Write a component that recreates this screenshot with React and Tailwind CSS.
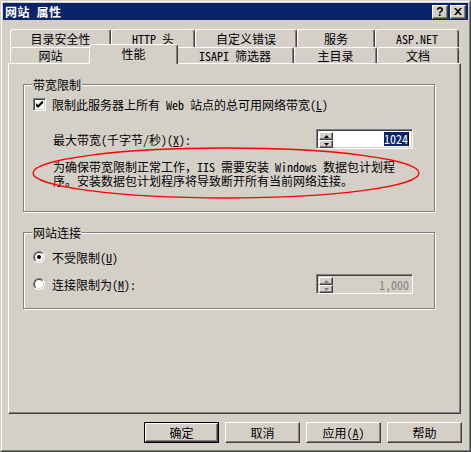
const F = "font-['Noto_Sans_Mono_CJK_SC','Noto_Sans_CJK_SC',sans-serif]";

const raised =
  "border border-t-white border-l-white border-r-[#404040] border-b-[#404040] shadow-[inset_-1px_-1px_0_#808080]";
const sunken =
  "border border-t-[#808080] border-l-[#808080] border-r-white border-b-white shadow-[inset_1px_1px_0_#404040,inset_-1px_-1px_0_#d4d0c8]";
const tabBase =
  "flex items-center justify-center border-t border-l border-r border-t-white border-l-white border-r-[#404040] rounded-t-[3px] shadow-[inset_-1px_0_0_#808080] bg-[#d4d0c8]";

function Arrow({ up, disabled }) {
  return (
    <svg width="5" height="3" viewBox="0 0 5 3">
      {up ? (
        <polygon points="2.5,0 5,3 0,3" fill={disabled ? "#808080" : "#000"} />
      ) : (
        <polygon points="0,0 5,0 2.5,3" fill={disabled ? "#808080" : "#000"} />
      )}
    </svg>
  );
}

function Spin({ disabled }) {
  return (
    <div
      className={`w-[97px] h-[20px] flex p-[2px] ${sunken} ${disabled ? "bg-[#d4d0c8]" : "bg-white"}`}
    >
      <div className="flex flex-col w-[14px] h-[16px]">
        <div className={`h-[8px] flex items-center justify-center bg-[#d4d0c8] ${raised}`}>
          <Arrow up disabled={disabled} />
        </div>
        <div className={`h-[8px] flex items-center justify-center bg-[#d4d0c8] ${raised}`}>
          <Arrow disabled={disabled} />
        </div>
      </div>
      <div className="flex-1 flex items-center justify-end pr-[1px]">
        {disabled ? (
          <span className="text-[#808080] leading-[13px]">1,000</span>
        ) : (
          <>
            <span className="bg-[#0a246a] text-white leading-[14px]">1024</span>
            <span className="w-px h-[14px] bg-black" />
          </>
        )}
      </div>
    </div>
  );
}

function Radio({ checked }) {
  return (
    <div className="w-[12px] h-[12px] rounded-full border border-t-[#808080] border-l-[#808080] border-r-white border-b-white">
      <div className="w-full h-full rounded-full border border-t-[#404040] border-l-[#404040] border-r-[#d4d0c8] border-b-[#d4d0c8] bg-white flex items-center justify-center">
        {checked && <div className="w-[4px] h-[4px] rounded-full bg-black" />}
      </div>
    </div>
  );
}

function Btn({ children, def }) {
  const inner = (
    <div className={`w-full h-full flex items-center justify-center bg-[#d4d0c8] ${raised}`}>
      {children}
    </div>
  );
  return def ? (
    <div className="w-[75px] h-[21px] border border-black">{inner}</div>
  ) : (
    <div className="w-[75px] h-[21px]">{inner}</div>
  );
}

export default function App() {
  return (
    <div className={`w-[471px] h-[452px] bg-[#d4d0c8] text-[12px] leading-[13px] text-black ${F}`}>
      <div className="w-full h-full border border-t-[#d4d0c8] border-l-[#d4d0c8] border-r-[#404040] border-b-[#404040]">
        <div className="w-full h-full border border-t-white border-l-white border-r-[#808080] border-b-[#808080] p-px flex flex-col">
          {/* Title bar */}
          <div className="h-[17px] bg-[#0a246a] flex items-center pl-[2px] pr-[2px]">
            <span className="text-white font-bold tracking-[0.5px]">网站 属性</span>
            <div className="ml-auto flex gap-[2px]">
              <div className={`w-[16px] h-[14px] flex items-center justify-center bg-[#d4d0c8] ${raised} font-bold text-[12px] leading-[12px] font-['Liberation_Sans',sans-serif]`}>
                ?
              </div>
              <div className={`w-[16px] h-[14px] flex items-center justify-center bg-[#d4d0c8] ${raised}`}>
                <svg width="8" height="7" viewBox="0 0 8 7">
                  <path d="M0 0h2l2 2.2L6 0h2L5 3.5 8 7H6L4 4.8 2 7H0l3-3.5z" fill="#000" />
                </svg>
              </div>
            </div>
          </div>

          {/* Body */}
          <div className="pl-[5px] flex flex-col">
            {/* Tab rows */}
            <div className="mt-[9px] ml-[2px] flex h-[18px] items-start">
              <div className={`${tabBase} w-[101px] h-[18px] pb-[1px]`}>目录安全性</div>
              <div className={`${tabBase} w-[84px] h-[18px] pb-[1px]`}>HTTP 头</div>
              <div className={`${tabBase} w-[102px] h-[18px] pb-[1px]`}>自定义错误</div>
              <div className={`${tabBase} w-[78px] h-[18px] pb-[1px]`}>服务</div>
              <div className={`${tabBase} w-[84px] h-[18px] pb-[1px]`}>ASP.NET</div>
            </div>
            <div className="ml-[2px] flex h-[16px] items-start">
              <div className={`${tabBase} w-[81px] h-[16px]`}>网站</div>
              <div className={`${tabBase} w-[89px] h-[20px] -mx-[2px] -mt-[3px] -mb-px relative z-10 pb-[3px]`}>性能</div>
              <div className={`${tabBase} w-[118px] h-[16px]`}>ISAPI 筛选器</div>
              <div className={`${tabBase} w-[83px] h-[16px]`}>主目录</div>
              <div className={`${tabBase} w-[82px] h-[16px]`}>文档</div>
            </div>

            {/* Panel */}
            <div className="w-[453px] h-[351px] border border-t-white border-l-white border-r-[#404040] border-b-[#404040] shadow-[inset_-1px_-1px_0_#808080] flex flex-col">
              {/* Group 1 */}
              <div className="relative mt-[20px] ml-[14px] w-[412px] h-[128px] border border-[#808080] shadow-[inset_1px_1px_0_#fff,1px_1px_0_#fff] flex flex-col">
                <span className="absolute -top-[7px] left-[8px] px-[1px] bg-[#d4d0c8]">带宽限制</span>
                <div className="mt-[13px] flex items-center h-[13px]">
                  <div className={`ml-[9px] w-[13px] h-[13px] bg-white ${sunken} flex items-center justify-center`}>
                    <svg width="7" height="7" viewBox="0 0 7 7">
                      <path d="M0 2v3l2 2 5-5V-1L2 4z" fill="#000" />
                    </svg>
                  </div>
                  <span className="ml-[6px]">
                    限制此服务器上所有 Web 站点的总可用网络带宽(<u>L</u>)
                  </span>
                </div>
                <div className="mt-[18px] flex items-center h-[20px]">
                  <span className="ml-[29px]">
                    最大带宽(千字节/秒)(<u>X</u>):
                  </span>
                  <div className="ml-auto mr-[21px]">
                    <Spin />
                  </div>
                </div>
                <div className="mt-[11px] ml-[29px] leading-[14px] whitespace-pre">
                  <div>为确保带宽限制正常工作，IIS 需要安装 Windows 数据包计划程</div>
                  <div>序。安装数据包计划程序将导致断开所有当前网络连接。</div>
                </div>
                <svg
                  className="absolute left-0 top-0 overflow-visible pointer-events-none"
                  width="412"
                  height="128"
                >
                  <ellipse cx="202" cy="88" rx="193" ry="25" fill="none" stroke="#f00" strokeWidth="1.3" />
                </svg>
              </div>

              {/* Group 2 */}
              <div className="relative mt-[20px] ml-[14px] w-[412px] h-[77px] border border-[#808080] shadow-[inset_1px_1px_0_#fff,1px_1px_0_#fff] flex flex-col">
                <span className="absolute -top-[7px] left-[8px] px-[1px] bg-[#d4d0c8]">网站连接</span>
                <div className="mt-[18px] flex items-center h-[12px]">
                  <div className="ml-[9px]">
                    <Radio checked />
                  </div>
                  <span className="ml-[7px]">
                    不受限制(<u>U</u>)
                  </span>
                </div>
                <div className="mt-[11px] flex items-center h-[20px]">
                  <div className="ml-[9px]">
                    <Radio />
                  </div>
                  <span className="ml-[7px]">
                    连接限制为(<u>M</u>):
                  </span>
                  <div className="ml-auto mr-[21px]">
                    <Spin disabled />
                  </div>
                </div>
              </div>
            </div>

            {/* Buttons */}
            <div className="mt-[8px] ml-[136px] flex gap-[6px]">
              <Btn def>确定</Btn>
              <Btn>取消</Btn>
              <Btn>
                应用(<u>A</u>)
              </Btn>
              <Btn>帮助</Btn>
            </div>
          </div>
        </div>
      </div>
    </div>
  );
}
